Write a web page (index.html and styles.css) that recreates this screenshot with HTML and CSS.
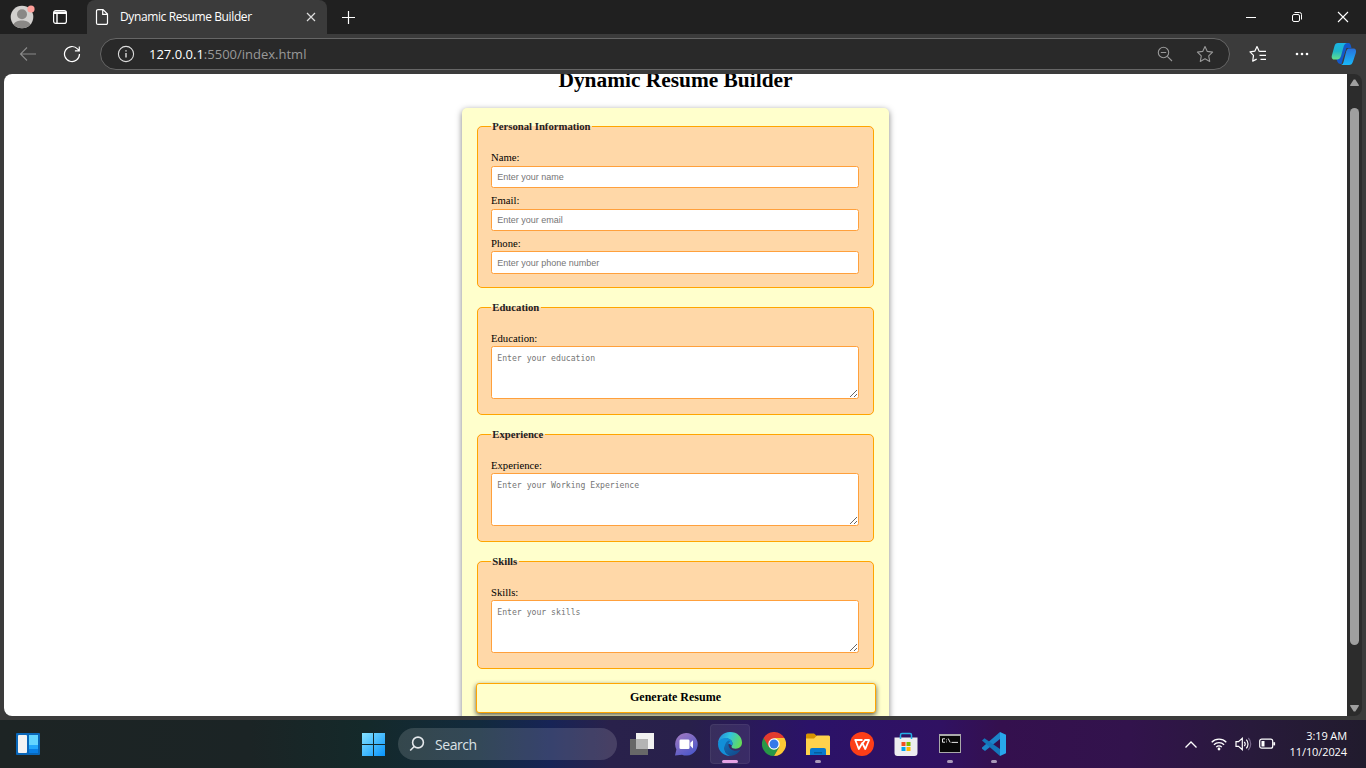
FILE: index.html
```html
<!DOCTYPE html>
<html lang="en">
<head>
<meta charset="utf-8">
<title>Dynamic Resume Builder</title>
<link rel="stylesheet" href="styles.css">
</head>
<body>
<div class="screen">
  <header class="tabbar">
    <svg class="profile" width="26" height="26" viewBox="0 0 26 26"><circle cx="12" cy="14" r="11.3" fill="#d2d0ce"/><circle cx="12" cy="11.2" r="5" fill="#8a8886"/><path d="M3.6 21.5c2-5.400 14.800-5.400 16.800 0a11.300 11.300 0 0 1-16.800 0z" fill="#8a8886"/><circle cx="21" cy="6" r="3.600" fill="#ff9f9a"/></svg>
    <svg class="workspace" width="16" height="16" viewBox="0 0 16 16" fill="none" stroke="#fff"><rect x="1.600" y="1.600" width="12.800" height="12.800" rx="2.200" stroke-width="1.200"/><path d="M2 3.200h12M2 4.300h12M5 5v9" stroke-width="1.400"/></svg>
    <div class="tab">
      <svg width="14" height="18" viewBox="0 0 14 18" fill="none" stroke="#fff" stroke-width="1.200"><path d="M3 1.600h5l4.500 4.500v8.800a1.500 1.500 0 0 1-1.500 1.500H3a1.500 1.500 0 0 1-1.500-1.500V3.100A1.500 1.500 0 0 1 3 1.600zM7.700 1.800v4.600h4.600"/></svg>
      <span class="tab-title">Dynamic Resume Builder</span>
      <svg class="tab-close" width="10" height="10" viewBox="0 0 10 10" stroke="#ddd" stroke-width="1.200"><path d="M1 1l8 8M9 1L1 9"/></svg>
    </div>
    <svg class="new-tab" width="15" height="15" viewBox="0 0 15 15" stroke="#fff" stroke-width="1.200"><path d="M7.500 1v13M1 7.500h13"/></svg>
    <div class="window-buttons">
      <svg width="12" height="12" viewBox="0 0 12 12" stroke="#fff"><path d="M1 6.500h10"/></svg>
      <svg width="12" height="12" viewBox="0 0 12 12" fill="none" stroke="#fff"><rect x="1.500" y="3.500" width="7" height="7" rx="1.500"/><path d="M3.500 1.500h5a2 2 0 0 1 2 2v5"/></svg>
      <svg width="12" height="12" viewBox="0 0 12 12" stroke="#fff" stroke-width="1.100"><path d="M1 1l10 10M11 1L1 11"/></svg>
    </div>
  </header>

  <nav class="toolbar">
    <svg class="back" width="18" height="16" viewBox="0 0 18 16" fill="none" stroke="#8a8a8a" stroke-width="1.100"><path d="M17 8H1.500M8 1.500L1.500 8 8 14.500"/></svg>
    <svg class="reload" width="18" height="18" viewBox="0 0 18 18" fill="none" stroke="#fff" stroke-width="1.200"><path d="M16.500 9a7.500 7.500 0 1 1-2-5.100l2 2M16.300 1.500v4.400h-4.400"/></svg>
    <div class="address">
      <svg width="18" height="18" viewBox="0 0 18 18" fill="none" stroke="#ddd" stroke-width="1.100"><circle cx="9" cy="9" r="7.600"/><path d="M9 8v4.500M9 5.200v1.300" stroke-width="1.400"/></svg>
      <span class="url"><b>127.0.0.1</b>:5500/index.html</span>
      <svg class="zoom-out" width="16" height="16" viewBox="0 0 16 16" fill="none" stroke="#999" stroke-width="1.100"><circle cx="6.500" cy="6.500" r="5.200"/><path d="M10.300 10.300L15 15M3.800 6.500h5.400"/></svg>
      <svg class="star" width="18" height="18" viewBox="0 0 18 18" fill="none" stroke="#999" stroke-width="1.100" stroke-linejoin="round"><path d="M9 1.500l2.300 4.900 5.300.7-3.900 3.700 1 5.600L9 13.800l-4.700 2.600 1-5.600L1.400 7.100l5.300-.7z"/></svg>
    </div>
    <svg class="favorites" width="18" height="18" viewBox="0 0 18 18" fill="none" stroke="#fff" stroke-width="1.200" stroke-linejoin="round"><path d="M11 6.500l-.8-.3L8 1.500 5.800 6.200 1 6.900l3.500 3.500-.8 5.700 4-2M11 6.400h6M10.500 10.400h6.500M11.500 14.400h5.500"/></svg>
    <svg class="dots" width="14" height="4" viewBox="0 0 14 4" fill="#fff"><circle cx="2" cy="2" r="1.300"/><circle cx="7" cy="2" r="1.300"/><circle cx="12" cy="2" r="1.300"/></svg>
    <svg class="copilot" width="26" height="24" viewBox="0 0 26 24">
      <defs><linearGradient id="cpA" x1="0" y1="0" x2="0" y2="1"><stop offset="0" stop-color="#18b4e6"/><stop offset=".5" stop-color="#20b5c8"/><stop offset="1" stop-color="#63e08b"/></linearGradient><linearGradient id="cpB" x1="0" y1="0" x2="0" y2="1"><stop offset="0" stop-color="#2870dc"/><stop offset="1" stop-color="#18b9fa"/></linearGradient></defs>
      <path d="M7 1h10c2.500 0 2.800 2 3.500 5h-5l-3 9-2 7c-3 0-4-1-5-5z" fill="#1358c9"/>
      <path d="M7 1h9c-2 .5-3 2-3.600 4.500L10 14c-.8 2.500-2 3.500-4 3.500H3C.8 17.500.3 15 1 13L3.500 4C4.100 2 5 1 7 1z" fill="url(#cpA)"/>
      <path d="M15 6.500h7.500c2.300 0 3 2 2.300 4.500L22 19.500c-.7 2.500-2 3.500-4 3.500H9.500c2 0 2.600-1.500 3.300-4l2-8c.5-2 .7-3.500 2.700-4.500z" fill="url(#cpB)"/>
    </svg>
  </nav>

  <div class="viewport">
    <main class="page">
      <h1>Dynamic Resume Builder</h1>
      <form class="resume">
        <fieldset class="personal">
          <legend>Personal Information</legend>
          <label for="name">Name:</label><input id="name" placeholder="Enter your name">
          <label for="email">Email:</label><input id="email" placeholder="Enter your email">
          <label for="phone">Phone:</label><input id="phone" placeholder="Enter your phone number">
        </fieldset>
        <fieldset>
          <legend>Education</legend>
          <label for="education">Education:</label><textarea id="education" placeholder="Enter your education"></textarea>
        </fieldset>
        <fieldset>
          <legend>Experience</legend>
          <label for="experience">Experience:</label><textarea id="experience" placeholder="Enter your Working Experience"></textarea>
        </fieldset>
        <fieldset>
          <legend>Skills</legend>
          <label for="skills">Skills:</label><textarea id="skills" placeholder="Enter your skills"></textarea>
        </fieldset>
        <button type="button">Generate Resume</button>
      </form>
    </main>
    <div class="scrollbar">
      <svg width="9" height="7" viewBox="0 0 9 7" fill="#9f9f9f"><path d="M3.700.5h1.600L9 6.200 8.600 7H.4L0 6.200z"/></svg>
      <div class="thumb"></div>
      <svg width="9" height="7" viewBox="0 0 9 7" fill="#9f9f9f"><path d="M3.700 6.500h1.600L9 .8 8.600 0H.4L0 .8z"/></svg>
    </div>
  </div>

  <footer class="taskbar">
    <svg class="widgets" width="24" height="22" viewBox="0 0 24 22"><rect width="24" height="22" rx="1" fill="#0967b9"/><rect x="2" y="2" width="9" height="18" rx="1" fill="#f3f3f3"/><path d="M13 2h9v10h-9z" fill="#63d5ff"/><path d="M13 12h9v4h-9z" fill="#22a7fb"/><path d="M13 16h9v4h-9z" fill="#087fe6"/></svg>
    <svg class="start" width="23" height="23" viewBox="0 0 23 23"><defs><linearGradient id="win" x1="0" y1="0" x2="1" y2="1"><stop offset="0" stop-color="#86e2ff"/><stop offset="1" stop-color="#0794fb"/></linearGradient></defs><path d="M0 0h11v11H0zM12 0h11v11H12zM0 12h11v11H0zM12 12h11v11H12z" fill="url(#win)"/></svg>
    <div class="search">
      <svg width="16" height="16" viewBox="0 0 16 16" fill="none" stroke="#e4e8ec" stroke-width="1.600"><circle cx="9" cy="6.500" r="5.400"/><path d="M5.200 10.500L1.200 14.500"/></svg>
      <span>Search</span>
    </div>
    <div class="apps">
      <div class="app"><svg width="24" height="24" viewBox="0 0 24 24"><path d="M6 1h18v16H6z" fill="#f1f1f1"/><path d="M0 7h18v16H0z" fill="#686868"/><path d="M6 7h12v10H6z" fill="#b4b4b4"/></svg></div>
      <div class="app"><svg width="24" height="24" viewBox="0 0 24 24"><defs><linearGradient id="chat" x1="0" y1="0" x2=".6" y2="1"><stop offset="0" stop-color="#a67bc0"/><stop offset="1" stop-color="#5059c9"/></linearGradient></defs><path d="M12 1a11.300 11.300 0 1 1-4 21.700L1 23.500l1.400-6A11.300 11.300 0 0 1 12 1z" fill="url(#chat)"/><rect x="5.500" y="7.500" width="10" height="9.500" rx="1.300" fill="#fff"/><path d="M16.300 10.800L19 8.200v8.200l-2.700-2.600z" fill="#fff"/></svg></div>
      <div class="app active"><svg width="24" height="24" viewBox="0 0 24 24"><defs><linearGradient id="edA" x1="0" x2="1" y1=".2" y2=".5"><stop offset="0" stop-color="#2389d8"/><stop offset=".45" stop-color="#31c3df"/><stop offset="1" stop-color="#64dc58"/></linearGradient><linearGradient id="edB" x1="0" x2=".8" y1="0" y2="1"><stop offset="0" stop-color="#1270b8"/><stop offset="1" stop-color="#114a8b"/></linearGradient></defs><path d="M0 12C0 5 5 0 12 0c7.500 0 12 5 12 10.500 0 4-2.800 6.200-6.300 6.200-2.500 0-4.200-1-4.200-2 0-.8 1-1.300 1-3C14.500 9 12 6.500 8.500 6.500 4 6.500.5 9 0 12z" fill="url(#edA)"/><path d="M0 12c.5-4 4-6 7.500-6 4 0 7 2.600 7 5.700 0 .7-.3 1.400-.6 1.900-.9-1.100-2.100-1.600-3.400-1.600-2.500 0-4 2.200-4 4.500 0 4 3.200 6.700 7 7.300C6 24.500 0 19.500 0 12z" fill="#128fd8"/><path d="M10.600 8.400C8 9.500 6.400 13 6.500 16.500c.1 4 3.200 7.300 7 7.300 4.100-.6 7.400-3 9-6-.5-.4-1.500.9-4.500.9-4.500 0-7.500-2.600-7.500-6 0-1.800.8-3 2-3.800z" fill="url(#edB)"/></svg><i class="mark long"></i></div>
      <div class="app"><svg width="24" height="24" viewBox="0 0 24 24"><path d="M1.600 6A12 12 0 0 0 12 24l5.200-9L12 12z" fill="#279847"/><path d="M12 6h10.400A12 12 0 0 1 12 24l5.200-9z" fill="#fcc934"/><path d="M1.600 6l5.200 9L12 12V6h10.400A12 12 0 0 0 1.600 6z" fill="#e33b2e"/><circle cx="12" cy="12" r="5.700" fill="#fff"/><circle cx="12" cy="12" r="4.500" fill="#3479e8"/></svg></div>
      <div class="app"><svg width="24" height="24" viewBox="0 0 24 24"><path d="M0 3a1.500 1.500 0 0 1 1.500-1.500H8L11 4v5H0z" fill="#d79300"/><path d="M0 6.500h8L11 3.500h12l1 1V23H0z" fill="#ffd24c"/><path d="M4 23v-5a2 2 0 0 1 2-2h12a2 2 0 0 1 2 2v5z" fill="#0879ce"/><path d="M8 20h8v1.500H8z" fill="#055d9d"/></svg><i class="mark"></i></div>
      <div class="app"><svg width="24" height="24" viewBox="0 0 24 24" fill="none" stroke="#fff" stroke-width="1.800"><circle cx="12" cy="12" r="12" fill="#fc3e18" stroke="none"/><path d="M4.500 8h8M5.300 8l3.500 9 3.500-6 3 6 3.800-9H15l-2.700 4" stroke-linejoin="round"/></svg></div>
      <div class="app"><svg width="24" height="24" viewBox="0 0 24 24"><path d="M.5 5.500h23V21a3 3 0 0 1-3 3h-17a3 3 0 0 1-3-3z" fill="#ededf0"/><path d="M6.500 7V3a1.500 1.500 0 0 1 1.500-1.500h8A1.500 1.500 0 0 1 17.500 3v4" fill="none" stroke="#25aee5" stroke-width="1.500"/><path d="M7.500 10h4v4h-4z" fill="#f25022"/><path d="M12.500 10h4v4h-4z" fill="#7fba00"/><path d="M7.500 15h4v4h-4z" fill="#00a4ef"/><path d="M12.500 15h4v4h-4z" fill="#ffb900"/></svg></div>
      <div class="app"><svg width="24" height="24" viewBox="0 0 24 24"><rect x="1" y="2" width="22" height="19" fill="#aaa"/><rect x="2" y="4" width="20" height="16" fill="#080808"/><path d="M7 6.800H4.500v3.400H7M8.500 7.500v.8M8.500 9.500v.8M10.200 6.500l2 4M13.500 10.400h6.500" fill="none" stroke="#e6e6e6" stroke-width="1"/></svg><i class="mark"></i></div>
      <div class="app"><svg width="24" height="24" viewBox="0 0 24 24"><path d="M18 0v7L3 19l-3-2.200v-1.300z" fill="#1b83c9"/><path d="M0 8.500L2.500 6.200 18 17v7z" fill="#1475ba"/><path d="M18 0l6 2.700v18.600L18 24z" fill="#28a8ec"/></svg><i class="mark"></i></div>
    </div>
    <div class="tray">
      <svg class="chevron" width="14" height="9" viewBox="0 0 14 9" fill="none" stroke="#fff" stroke-width="1.300"><path d="M1.500 7.500L7 2l5.500 5.500"/></svg>
      <svg class="wifi" width="16" height="14" viewBox="0 0 16 14" fill="none" stroke="#fff" stroke-width="1.300"><path d="M.7 5.200a10.300 10.300 0 0 1 14.600 0M2.900 7.700a7.200 7.200 0 0 1 10.200 0M5.200 10.100a4 4 0 0 1 5.600 0"/><circle cx="8" cy="12" r="1.400" fill="#fff" stroke="none"/></svg>
      <svg class="volume" width="17" height="14" viewBox="0 0 17 14" fill="none" stroke="#fff" stroke-width="1.200"><path d="M1 4.700h2.500L7.300 1.300v11.400L3.500 9.300H1zM9.300 4.800a3.500 3.500 0 0 1 0 4.400M11.300 2.700a6.300 6.300 0 0 1 0 8.600"/><path d="M13.300 1a8.600 8.600 0 0 1 0 12" stroke="#77678a"/></svg>
      <svg class="battery" width="17" height="12" viewBox="0 0 17 12" fill="none" stroke="#fff" stroke-width="1.200"><rect x=".7" y="1.200" width="13" height="9" rx="2"/><path d="M2.500 3h3v5.500h-3z" fill="#fff" stroke="none"/><path d="M15.200 4.200v3.200" stroke-width="1.800"/></svg>
      <div class="clock"><span class="time">3:19 AM</span><span class="date">11/10/2024</span></div>
    </div>
  </footer>
</div>
</body>
</html>
```
FILE: styles.css
```css
* { box-sizing: border-box; }
body { margin: 0; background: #3b3b3b; font-family: "Open Sans", "Noto Sans", sans-serif; overflow: hidden; }
svg { display: block; flex: none; }
.screen { width: 1366px; height: 768px; display: flex; flex-direction: column; overflow: hidden; }

.tabbar { height: 34px; flex: none; display: flex; align-items: center; background: #202020; }
.profile { margin-left: 10px; margin-top: -3px; }
.workspace { margin-left: 16px; }
.tab { width: 240px; height: 34px; margin-left: 19px; padding: 0 11px 0 8px; display: flex; align-items: center; background: #3b3b3b; border-radius: 8px 8px 0 0; }
.tab-title { margin-left: 11px; font-size: 12px; letter-spacing: -.38px; color: #fff; white-space: nowrap; padding-bottom: 1px; }
.tab-close { margin-left: auto; }
.new-tab { margin-left: 14px; }
.window-buttons { margin-left: auto; margin-right: 17px; display: flex; gap: 34px; }

.toolbar { height: 40px; flex: none; display: flex; align-items: center; background: #3b3b3b; }
.back { margin-left: 19px; }
.reload { margin-left: 26px; }
.address { width: 1130px; height: 32px; margin-left: 19px; padding: 0 15px 0 16px; display: flex; align-items: center; background: #292929; border: 1px solid #666; border-radius: 16px; }
.url { margin-left: 14px; font-size: 13px; color: #999; }
.url b { color: #fff; font-weight: 400; }
.zoom-out { margin-left: auto; }
.star { margin-left: 23px; }
.favorites { margin-left: 19px; }
.dots { margin-left: 28px; }
.copilot { margin-left: 22px; }

.viewport { height: 642px; flex: none; margin: 0 4px; display: flex; border-radius: 8px; overflow: hidden; background: #2c2c2c; }
.page { width: 1343px; height: 642px; overflow: hidden; background: #fff; font-family: "Liberation Serif", serif; color: #000; display: flex; flex-direction: column; align-items: center; }
h1 { flex: none; margin: -6px 0 16px; font-size: 21.4px; line-height: 24px; }
.resume { flex: none; width: 427px; height: 640px; padding: 12px 15px 0; background: #ffffcc; border-radius: 5px; box-shadow: 0 2px 6px rgba(0,0,0,.5); }
fieldset { min-width: 0; height: 114px; margin: 0 0 13px; padding: 16.8px 13px 0; border: 1px solid orange; border-radius: 5px; background: #ffd8a8; }
fieldset.personal { height: 167.6px; }
legend { height: 13px; padding: 0 1.3px; font-size: 10.7px; line-height: 13px; font-weight: 700; color: #222; }
label { display: block; height: 16px; padding-top: .4px; font-size: 10.7px; line-height: 14px; }
input, textarea { display: block; width: 368px; border: 1px solid #ffa03c; border-radius: 2.5px; background: #fff; outline: 0; }
input { height: 22.2px; margin-bottom: 4.6px; padding: 0 5.3px; font: 9px "Liberation Sans", sans-serif; }
#phone { padding-top: .8px; }
textarea { height: 53px; padding: 5.3px; font: 8.15px/10.6px "DejaVu Sans Mono", monospace; resize: vertical; }
::placeholder { color: #757575; }
button { display: block; width: 400px; height: 30px; margin: 14.4px 0 0 -1px; padding: 0 1px 0 0; border: 1px solid orange; border-radius: 3px; background: #ffffcc; box-shadow: 0 2px 5px rgba(0,0,0,.65); font: bold 12px "Liberation Serif", serif; color: #000; }
fieldset:last-of-type { margin-bottom: 0; }

.scrollbar { width: 15px; padding: 5px 0 4px; display: flex; flex-direction: column; align-items: center; justify-content: space-between; }
.thumb { width: 9px; height: 537px; margin-bottom: 38px; border-radius: 5px; background: #9f9f9f; }

.taskbar { height: 48px; flex: none; margin-top: 4px; display: flex; align-items: center; background: linear-gradient(90deg, #1d2424 0, #1b2425 250px, #14292a 365px, #122a3d 480px, #172456 550px, #29214b 610px, #28204b 690px, #2b1268 810px, #301162 940px, #34104e 1000px, #32134c 1130px, #281a3b 1250px, #211b2d 1366px); color: #fff; }
.widgets { margin-left: 16px; }
.start { margin-left: 322px; }
.search { width: 219px; height: 32px; margin-left: 13px; padding-left: 11px; display: flex; align-items: center; gap: 10px; border-radius: 16px; background: rgba(255,255,255,.14); font-size: 14px; letter-spacing: -.45px; color: #dce2e6; }
.apps { display: flex; gap: 4px; margin-left: 5px; }
.app { position: relative; width: 40px; height: 40px; display: flex; align-items: center; justify-content: center; border-radius: 4px; }
.app.active { background: rgba(255,255,255,.08); border: 1px solid rgba(255,255,255,.06); }
.mark { position: absolute; left: 17px; bottom: 1px; width: 6px; height: 3px; border-radius: 2px; background: #a99ab9; }
.mark.long { left: 11px; bottom: 0; width: 16px; background: #e5a2e5; }
.tray { margin-left: auto; padding-right: 19px; display: flex; align-items: center; }
.wifi { margin-left: 13px; }
.volume { margin-left: 8px; }
.battery { margin-left: 7px; }
.clock { width: 59px; margin-left: 12px; display: flex; flex-direction: column; align-items: flex-end; font-size: 11px; line-height: 16px; letter-spacing: -.1px; white-space: nowrap; }
```
